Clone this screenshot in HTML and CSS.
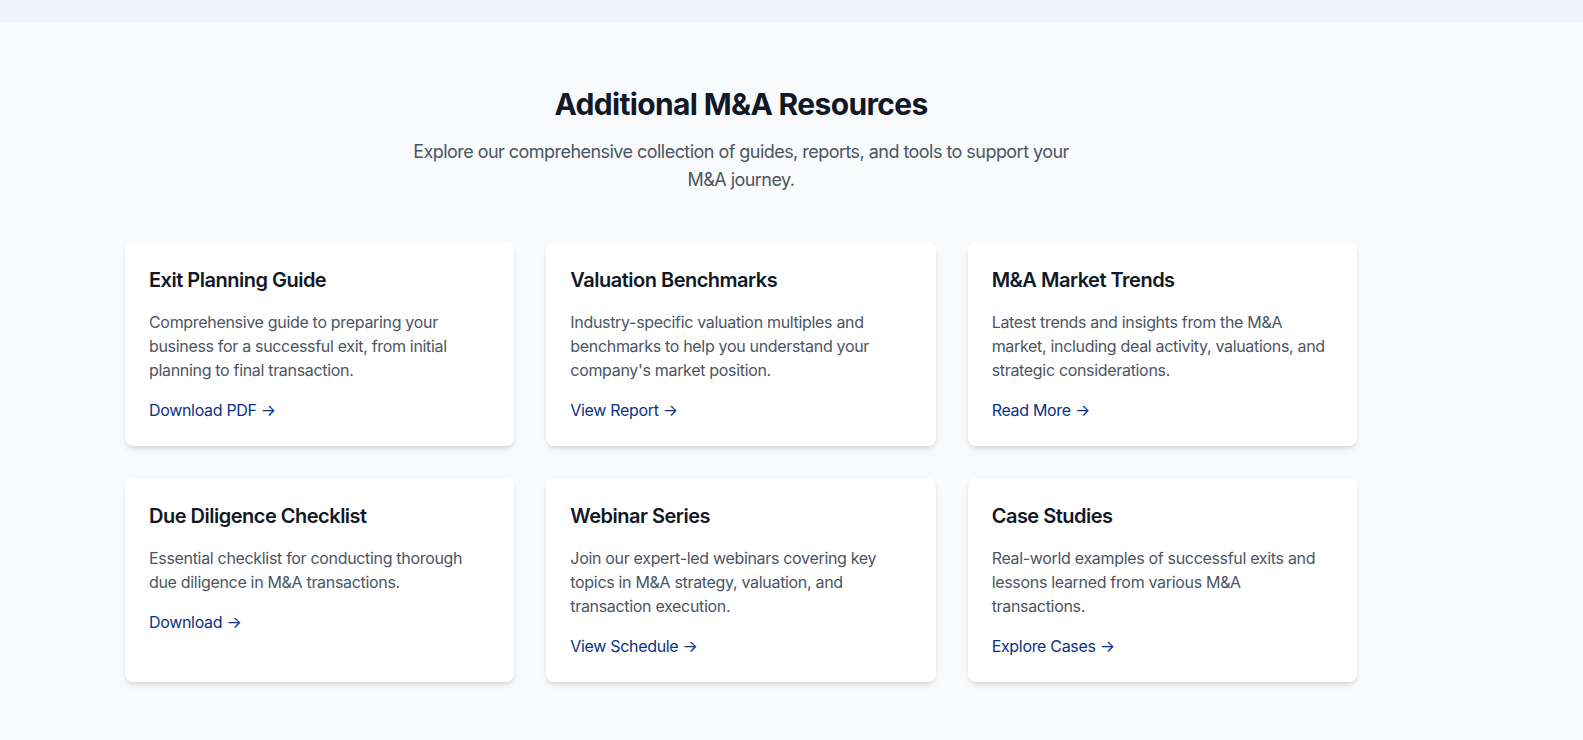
FILE: index.html
```html
<!DOCTYPE html>
<html lang="en">
<head>
<meta charset="utf-8">
<title>Additional M&amp;A Resources</title>
<link rel="stylesheet" href="styles.css">
</head>
<body>
<div class="topbar"></div>
<section class="resources">
  <div class="container">
    <header class="intro">
      <h2 class="intro-title">Additional M&amp;A Resources</h2>
      <p class="intro-text">Explore our comprehensive collection of guides, reports, and tools to support your M&amp;A journey.</p>
    </header>
    <div class="grid">
      <article class="card">
        <h3 class="card-title">Exit Planning Guide</h3>
        <p class="card-text">Comprehensive guide to preparing your business for a successful exit, from initial planning to final transaction.</p>
        <a class="card-link" href="#">Download PDF →</a>
      </article>
      <article class="card">
        <h3 class="card-title">Valuation Benchmarks</h3>
        <p class="card-text">Industry-specific valuation multiples and benchmarks to help you understand your company's market position.</p>
        <a class="card-link" href="#">View Report →</a>
      </article>
      <article class="card">
        <h3 class="card-title">M&amp;A Market Trends</h3>
        <p class="card-text">Latest trends and insights from the M&amp;A market, including deal activity, valuations, and strategic considerations.</p>
        <a class="card-link" href="#">Read More →</a>
      </article>
      <article class="card">
        <h3 class="card-title">Due Diligence Checklist</h3>
        <p class="card-text">Essential checklist for conducting thorough due diligence in M&amp;A transactions.</p>
        <a class="card-link" href="#">Download →</a>
      </article>
      <article class="card">
        <h3 class="card-title">Webinar Series</h3>
        <p class="card-text">Join our expert-led webinars covering key topics in M&amp;A strategy, valuation, and transaction execution.</p>
        <a class="card-link" href="#">View Schedule →</a>
      </article>
      <article class="card">
        <h3 class="card-title">Case Studies</h3>
        <p class="card-text">Real-world examples of successful exits and lessons learned from various M&amp;A transactions.</p>
        <a class="card-link" href="#">Explore Cases →</a>
      </article>
    </div>
  </div>
</section>
</body>
</html>
```

FILE: styles.css
```css
* {
  box-sizing: border-box;
}

html, body {
  margin: 0;
  padding: 0;
}

body {
  font-family: Inter, "Noto Sans", "Liberation Sans", sans-serif;
  background: #f9fafb;
  color: #111827;
  letter-spacing: -0.02em;
  -webkit-font-smoothing: antialiased;
}

.topbar {
  height: 22px;
  background: #eff3fb;
}

.resources {
  background: #f9fafb;
  padding: 64px 101px 64px 0;
}

.container {
  max-width: 1280px;
  margin: 0 auto;
  padding: 0 24px;
}

.intro {
  text-align: center;
  margin-bottom: 48px;
}

.intro-title {
  margin: 0 0 16px;
  font-size: 30px;
  line-height: 36px;
  font-weight: 700;
  letter-spacing: -0.022em;
  color: #111827;
}

.intro-text {
  margin: 0 auto;
  max-width: 672px;
  font-size: 18px;
  line-height: 28px;
  letter-spacing: -0.03em;
  color: #4b5563;
}

.grid {
  display: grid;
  grid-template-columns: repeat(3, 1fr);
  gap: 32px;
}

.card {
  background: #ffffff;
  border-radius: 8px;
  padding: 24px;
  box-shadow: 0 4px 6px -1px rgba(0, 0, 0, 0.1), 0 2px 4px -2px rgba(0, 0, 0, 0.1);
  display: flex;
  flex-direction: column;
  align-items: flex-start;
}

.card-title {
  margin: 0 0 16px;
  font-size: 20px;
  line-height: 28px;
  font-weight: 600;
  letter-spacing: -0.025em;
  color: #111827;
}

.card-text {
  margin: 0 0 16px;
  font-size: 16px;
  line-height: 24px;
  color: #4b5563;
}

.card-link {
  font-size: 16px;
  line-height: 24px;
  font-weight: 400;
  color: #0b3185;
  text-decoration: none;
}
```
